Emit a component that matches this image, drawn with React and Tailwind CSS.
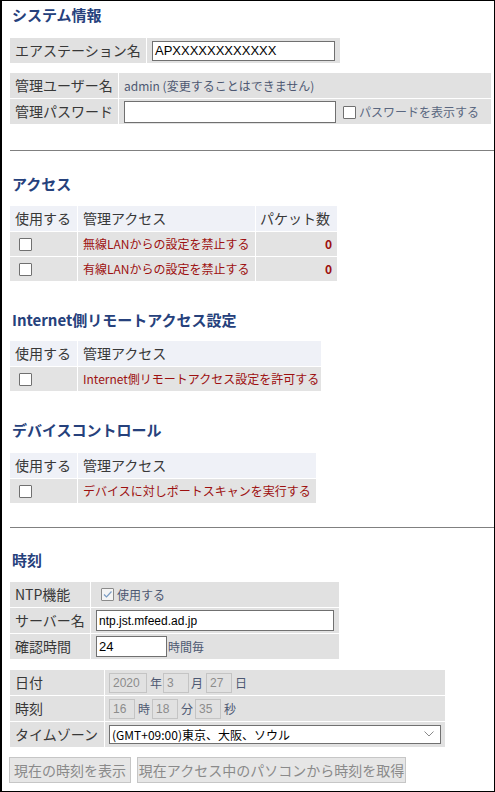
import React from "react";

const F = { fontFamily: '"Noto Sans CJK JP", "Noto Sans", sans-serif' };
const IF = { fontFamily: '"Liberation Sans", "Noto Sans CJK JP", sans-serif' };

function Title({ children, className = "" }) {
  return (
    <div className={"h-5 leading-5 text-[15px] font-bold text-[#26417c] pl-[2px] " + className}>
      {children}
    </div>
  );
}

function Box() {
  return <span className="inline-block w-[13px] h-[13px] border border-[#707070] bg-white rounded-[1px] shrink-0" />;
}

function Checked() {
  return (
    <span className="inline-flex items-center justify-center w-[13px] h-[13px] border border-[#8a8a8a] bg-[#f4f4f4] rounded-[1px] shrink-0">
      <svg width="11" height="11" viewBox="0 0 11 11">
        <path d="M2 5.5 L4.5 8 L9.5 2.5" fill="none" stroke="#7a9cc4" strokeWidth="1.2" />
      </svg>
    </span>
  );
}

function Cell({ className = "", children }) {
  return <div className={"flex items-center " + className}>{children}</div>;
}

function Hr({ className = "" }) {
  return <div className={"h-px bg-[#808080] mr-0 " + className} />;
}

function Dis({ w, v }) {
  return (
    <span
      className={"inline-flex items-center h-[20px] border border-[#c4c4c4] text-[12px] text-[#8c8c8c] pl-[3px] " + w}
      style={IF}
    >
      {v}
    </span>
  );
}

export default function App() {
  return (
    <div
      className="w-[495px] h-[792px] box-border border-t border-r border-b border-l-2 border-black bg-white overflow-hidden pl-[8px] text-[#383838]"
      style={F}
    >
      <Title className="mt-[4px]">システム情報</Title>

      {/* Table 1 */}
      <div className="mt-[13px] grid grid-cols-[136px_193px] gap-px w-[330px]">
        <Cell className="h-[25px] bg-[#e1e1e1] pl-[5px] text-[14px]">エアステーション名</Cell>
        <Cell className="h-[25px] bg-[#e1e1e1] pl-[5px]">
          <span
            className="inline-flex items-center w-[183px] h-[20px] border border-[#707070] bg-white text-[13px] text-black pl-[2px]"
            style={IF}
          >
            APXXXXXXXXXXXX
          </span>
        </Cell>
      </div>

      {/* Table 2 */}
      <div className="mt-[10px] grid grid-cols-[108px_372px] gap-px w-[481px]">
        <Cell className="h-[25px] bg-[#e1e1e1] pl-[5px] text-[14px]">管理ユーザー名</Cell>
        <Cell className="h-[25px] bg-[#e1e1e1] pl-[5px] text-[12px] text-[#4d5872]">admin (変更することはできません)</Cell>
        <Cell className="h-[25px] bg-[#e1e1e1] pl-[5px] text-[14px]">管理パスワード</Cell>
        <Cell className="h-[25px] bg-[#e1e1e1] pl-[5px]">
          <span className="inline-block w-[212px] h-[22px] border border-[#707070] bg-white" />
          <span className="ml-[7px]">
            <Box />
          </span>
          <span className="ml-[3px] text-[12px] text-[#5a6780]">パスワードを表示する</span>
        </Cell>
      </div>

      <Hr className="mt-[26px]" />

      <Title className="mt-[23px]">アクセス</Title>
      <div className="mt-[12px] grid grid-cols-[67px_177px_81px] gap-px w-[327px]">
        <Cell className="h-[25px] bg-[#eff1f7] pl-[5px] text-[14px]">使用する</Cell>
        <Cell className="h-[25px] bg-[#eff1f7] pl-[5px] text-[14px]">管理アクセス</Cell>
        <Cell className="h-[25px] bg-[#eff1f7] pl-[4px] text-[14px]">パケット数</Cell>

        <Cell className="h-[24px] bg-[#e3e3e3] pl-[9px]"><Box /></Cell>
        <Cell className="h-[24px] bg-[#e3e3e3] pl-[5px] text-[12px] text-[#9d1010]">無線LANからの設定を禁止する</Cell>
        <Cell className="h-[24px] bg-[#e3e3e3] justify-end pr-[5px] text-[12px] font-bold text-[#9d1010]">0</Cell>

        <Cell className="h-[24px] bg-[#e3e3e3] pl-[9px]"><Box /></Cell>
        <Cell className="h-[24px] bg-[#e3e3e3] pl-[5px] text-[12px] text-[#9d1010]">有線LANからの設定を禁止する</Cell>
        <Cell className="h-[24px] bg-[#e3e3e3] justify-end pr-[5px] text-[12px] font-bold text-[#9d1010]">0</Cell>
      </div>

      <Title className="mt-[29px]">Internet側リモートアクセス設定</Title>
      <div className="mt-[11px] grid grid-cols-[67px_243px] gap-px w-[311px]">
        <Cell className="h-[25px] bg-[#eff1f7] pl-[5px] text-[14px]">使用する</Cell>
        <Cell className="h-[25px] bg-[#eff1f7] pl-[5px] text-[14px]">管理アクセス</Cell>
        <Cell className="h-[24px] bg-[#e3e3e3] pl-[9px]"><Box /></Cell>
        <Cell className="h-[24px] bg-[#e3e3e3] pl-[5px] text-[12px] text-[#9d1010]">Internet側リモートアクセス設定を許可する</Cell>
      </div>

      <Title className="mt-[29px]">デバイスコントロール</Title>
      <div className="mt-[13px] grid grid-cols-[67px_238px] gap-px w-[306px]">
        <Cell className="h-[25px] bg-[#eff1f7] pl-[5px] text-[14px]">使用する</Cell>
        <Cell className="h-[25px] bg-[#eff1f7] pl-[5px] text-[14px]">管理アクセス</Cell>
        <Cell className="h-[24px] bg-[#e3e3e3] pl-[9px]"><Box /></Cell>
        <Cell className="h-[24px] bg-[#e3e3e3] pl-[5px] text-[12px] text-[#9d1010]">デバイスに対しポートスキャンを実行する</Cell>
      </div>

      <Hr className="mt-[24px]" />

      <Title className="mt-[22px]">時刻</Title>
      <div className="mt-[12px] grid grid-cols-[80px_248px] gap-px w-[329px]">
        <Cell className="h-[25px] bg-[#e1e1e1] pl-[5px] text-[14px]">NTP機能</Cell>
        <Cell className="h-[25px] bg-[#e1e1e1] pl-[10px]">
          <Checked />
          <span className="ml-[3px] text-[12px] text-[#4d5872]">使用する</span>
        </Cell>
        <Cell className="h-[25px] bg-[#e1e1e1] pl-[5px] text-[14px]">サーバー名</Cell>
        <Cell className="h-[25px] bg-[#e1e1e1] pl-[5px]">
          <span
            className="inline-flex items-center w-[238px] h-[21px] border border-[#707070] bg-white text-[12px] text-black pl-[2px]"
            style={IF}
          >
            ntp.jst.mfeed.ad.jp
          </span>
        </Cell>
        <Cell className="h-[25px] bg-[#e1e1e1] pl-[5px] text-[14px]">確認時間</Cell>
        <Cell className="h-[25px] bg-[#e1e1e1] pl-[5px]">
          <span
            className="inline-flex items-center w-[71px] h-[21px] border border-[#707070] bg-white text-[13px] text-black pl-[2px]"
            style={IF}
          >
            24
          </span>
          <span className="ml-[1px] text-[12px] text-[#4d5872]">時間毎</span>
        </Cell>
      </div>

      <div className="mt-[11px] grid grid-cols-[94px_340px] gap-px w-[435px]">
        <Cell className="h-[25px] bg-[#e1e1e1] pl-[5px] text-[14px]">日付</Cell>
        <Cell className="h-[25px] bg-[#e1e1e1] pl-[4px] text-[12px] text-[#4d5872]">
          <Dis w="w-[38px]" v="2020" />
          <span className="ml-[3px] w-[13px]">年</span>
          <Dis w="w-[26px]" v="3" />
          <span className="ml-[2px] w-[15px]">月</span>
          <Dis w="w-[26px]" v="27" />
          <span className="ml-[3px]">日</span>
        </Cell>
        <Cell className="h-[25px] bg-[#e1e1e1] pl-[5px] text-[14px]">時刻</Cell>
        <Cell className="h-[25px] bg-[#e1e1e1] pl-[4px] text-[12px] text-[#4d5872]">
          <Dis w="w-[26px]" v="16" />
          <span className="ml-[3px] w-[14px]">時</span>
          <Dis w="w-[26px]" v="18" />
          <span className="ml-[3px] w-[14px]">分</span>
          <Dis w="w-[26px]" v="35" />
          <span className="ml-[3px]">秒</span>
        </Cell>
        <Cell className="h-[25px] bg-[#e1e1e1] pl-[5px] text-[14px]">タイムゾーン</Cell>
        <Cell className="h-[25px] bg-[#e1e1e1] pl-[4px]">
          <span className="relative inline-flex items-center w-[332px] h-[19px] border border-[#707070] bg-white text-[12px] text-black pl-[2px]">
            (GMT+09:00)東京、大阪、ソウル
            <svg className="absolute right-[6px] top-[5px]" width="10" height="6" viewBox="0 0 10 6">
              <path d="M0.5 0.5 L5 5 L9.5 0.5" fill="none" stroke="#8a8a8a" strokeWidth="1" />
            </svg>
          </span>
        </Cell>
      </div>

      <div className="mt-[10px] flex gap-[6px] -ml-px">
        <div className="h-[26px] w-[122px] flex items-center justify-center bg-[#e6e6e6] border border-[#c6c6c6] text-[14px] text-[#8a8a8a]">
          現在の時刻を表示
        </div>
        <div className="h-[26px] w-[269px] flex items-center justify-center bg-[#e6e6e6] border border-[#c6c6c6] text-[14px] text-[#8a8a8a]">
          現在アクセス中のパソコンから時刻を取得
        </div>
      </div>
    </div>
  );
}
